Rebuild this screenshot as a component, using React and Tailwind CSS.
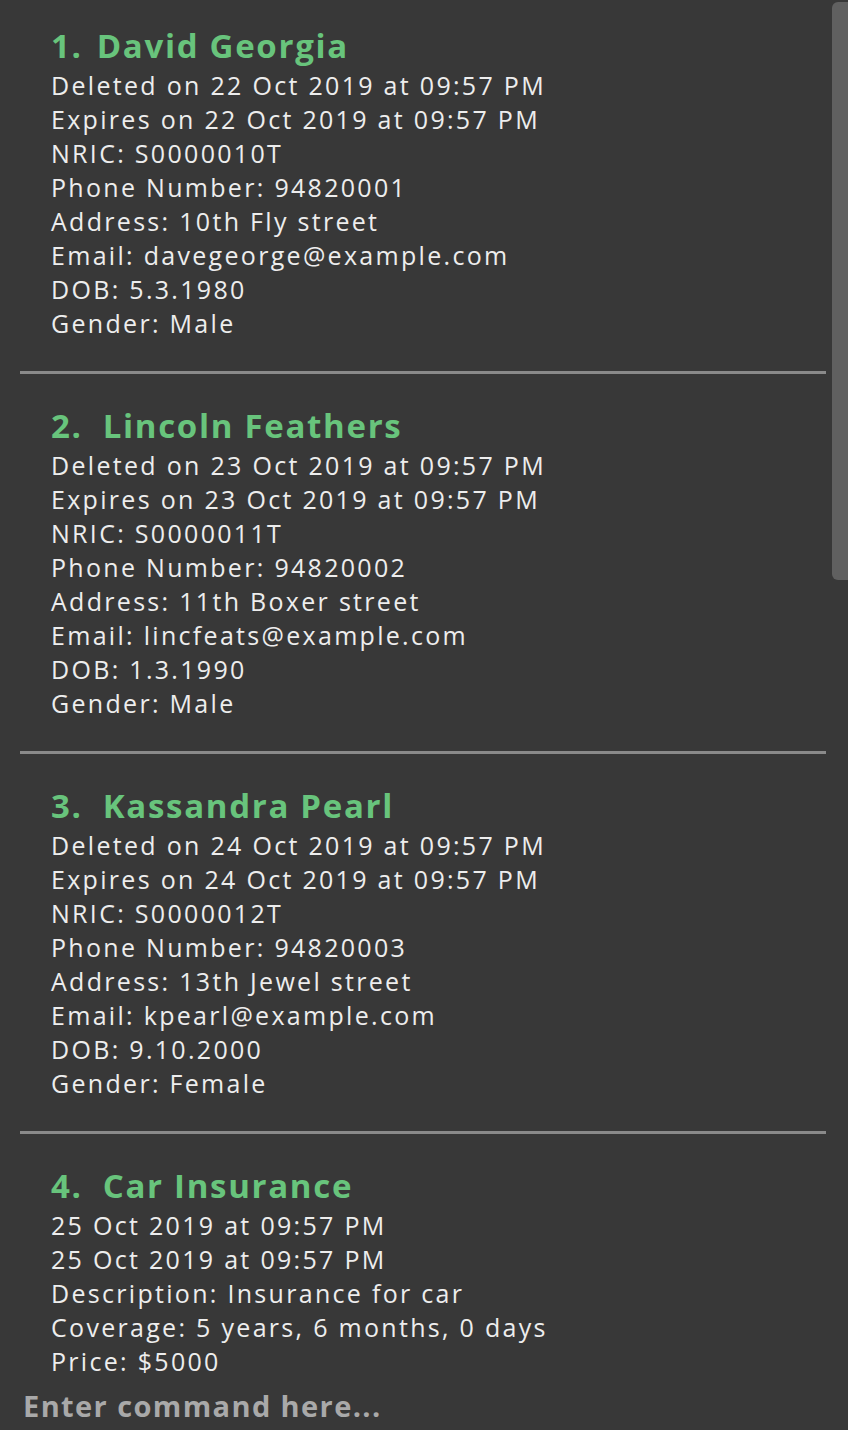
const items = [
  {
    name: "David Georgia",
    lines: [
      "Deleted on 22 Oct 2019 at 09:57 PM",
      "Expires on 22 Oct 2019 at 09:57 PM",
      "NRIC: S0000010T",
      "Phone Number: 94820001",
      "Address: 10th Fly street",
      "Email: davegeorge@example.com",
      "DOB: 5.3.1980",
      "Gender: Male",
    ],
  },
  {
    name: "Lincoln Feathers",
    lines: [
      "Deleted on 23 Oct 2019 at 09:57 PM",
      "Expires on 23 Oct 2019 at 09:57 PM",
      "NRIC: S0000011T",
      "Phone Number: 94820002",
      "Address: 11th Boxer street",
      "Email: lincfeats@example.com",
      "DOB: 1.3.1990",
      "Gender: Male",
    ],
  },
  {
    name: "Kassandra Pearl",
    lines: [
      "Deleted on 24 Oct 2019 at 09:57 PM",
      "Expires on 24 Oct 2019 at 09:57 PM",
      "NRIC: S0000012T",
      "Phone Number: 94820003",
      "Address: 13th Jewel street",
      "Email: kpearl@example.com",
      "DOB: 9.10.2000",
      "Gender: Female",
    ],
  },
  {
    name: "Car Insurance",
    lines: [
      "25 Oct 2019 at 09:57 PM",
      "25 Oct 2019 at 09:57 PM",
      "Description: Insurance for car",
      "Coverage: 5 years, 6 months, 0 days",
      "Price: $5000",
    ],
  },
];

export default function App() {
  return (
    <div className="h-[1430px] w-[848px] bg-[#383838] flex flex-col overflow-hidden font-['Open_Sans',sans-serif]">
      <div className="flex-1 flex overflow-hidden">
        {/* list */}
        <div className="flex-1 flex flex-col">
          {items.map((item, i) => (
            <div key={i} className="flex flex-col">
              <div className={`${i === 0 ? "pt-[24px]" : "pt-[30px]"} pb-[31px] pl-[51px]`}>
                <div className="h-[44px] leading-[44px] text-[33px] font-bold text-[#68c47c] tracking-[1.7px]">
                  {i + 1}.<span className={i === 0 ? "ml-[14px]" : "ml-[20px]"}>{item.name}</span>
                </div>
                {item.lines.map((l, j) => (
                  <div key={j} className="h-[34px] leading-[34px] text-[25px] text-[#ededed] tracking-[2.3px]">
                    {l}
                  </div>
                ))}
              </div>
              <div className="ml-[20px] mr-[6px] h-[3px] bg-[#8a8a8a]" />
            </div>
          ))}
        </div>
        {/* scrollbar */}
        <div className="w-[16px] pt-[2px]">
          <div className="h-[578px] rounded-tl-[6px] rounded-bl-[6px] bg-[#606060]" />
        </div>
      </div>
      <div className="h-[48px] pl-[23px] flex items-center text-[29px] font-bold text-[#a9a9a9] tracking-[1.4px]">
        Enter command here...
      </div>
    </div>
  );
}
